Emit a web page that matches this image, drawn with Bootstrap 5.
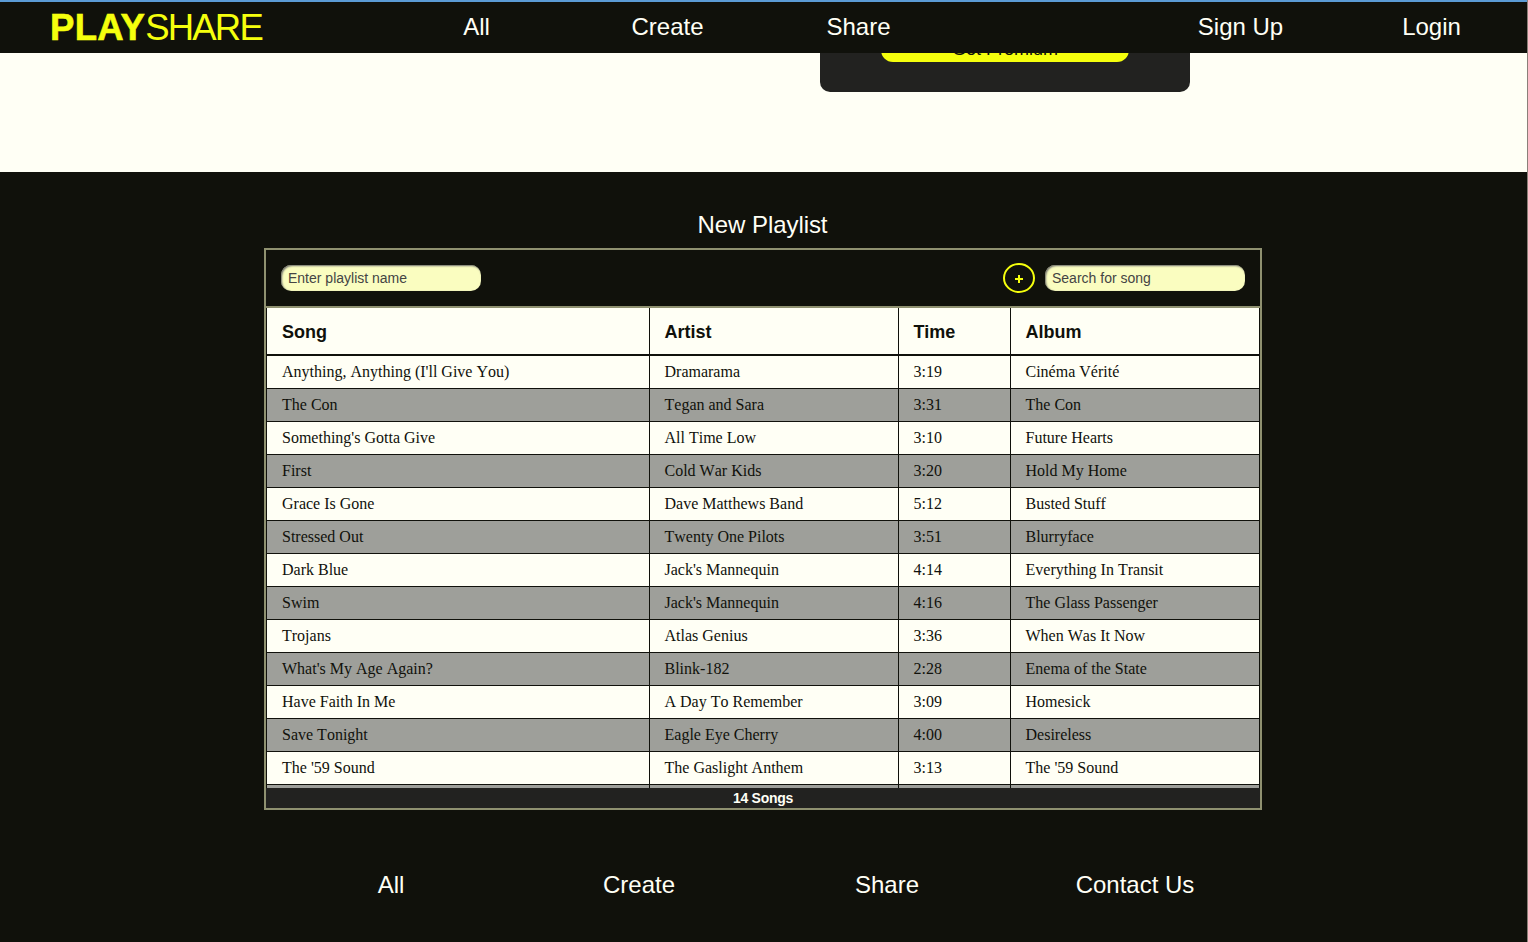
<!DOCTYPE html>
<html lang="en">
<head>
  <meta charset="UTF-8"/>
  <title>PlayShare – New Playlist</title>
  <meta name="viewport" content="width=device-width, initial-scale=1"/>
  <link href="https://cdn.jsdelivr.net/npm/bootstrap@5.3.0/dist/css/bootstrap.min.css" rel="stylesheet"/>
  <style>
    html { background:#8a8078; }
    body { background:#10110b; color:#fffff5; font-family:"Liberation Sans", Arial, sans-serif; overflow:hidden; margin-right:1px; min-height:100vh; }
    .top-nav { height:53px; background:#10110b; border-top:2px solid #5b9bd5; right:1px; }
    .brand-text { width:381px; padding-left:50px; font-size:36.5px; line-height:51px; color:#f5ff0d; text-decoration:none; }
    .brand-text b { letter-spacing:.3px; -webkit-text-stroke:.6px #f5ff0d; }
    .brand-text span { letter-spacing:-1.8px; }
    .top-link { width:191px; font-size:24px; line-height:50px; color:#fffff5; text-align:center; text-decoration:none; }
    .nav-gap { width:191px; }
    .hero-band { height:172px; background:#fffff5; }
    .premium-box { width:370px; height:92px; margin-left:820px; background:#222220; border-radius:0 0 10px 10px; }
    .premium-btn { width:248px; height:62px; padding:35px 0 0; background:#f5ff0d; color:#10110b; border:0; border-radius:0 0 12px 12px; font-size:18px; line-height:20px; }
    .page-title { font-size:24px; line-height:29px; padding:38px 2px 0 0; margin-bottom:9px; font-weight:400; letter-spacing:-.06px; }
    .playlist-box { width:998px; margin-left:264px; border:2px solid #8f9170; }
    .tool-bar { height:58px; padding:0 15px; border-bottom:2px solid #8f9170; }
    .pill-input { width:200px; height:26px; padding:0 7px; font-size:14px; background:#fafdc0; color:#333; border:0; border-radius:10px; box-shadow:inset 1px 1px 2px #666; }
    .pill-input::placeholder { color:#444; opacity:1; }
    .add-btn { width:32px; height:30px; padding:2px 0 0; background:transparent; border:2px solid #f5ff0d; border-radius:50%; margin-right:10px; }
    .add-btn svg { display:block; margin:0 auto; }
    .song-scroll { height:480px; overflow:hidden; margin:0 1px; }
    .song-table { table-layout:fixed; width:993px; margin:0; border-collapse:collapse; --bs-table-bg:#fffff5; --bs-table-color:#10110b; }
    .song-table th, .song-table td { padding:0 15px; border:1px solid #10110b; vertical-align:middle; }
    .song-table tr > :first-child { border-left:0; }
    .song-table tr > :last-child { border-right:0; }
    .song-table thead th { height:47px; padding-top:2px; font-size:18px; font-weight:700; border-top:0; border-bottom:2px solid #10110b; }
    .song-table tbody td { height:33px; font-family:"Liberation Serif", "Times New Roman", serif; font-size:16px; font-kerning:none; }
    .song-table tbody tr:nth-child(even) td { background:#9e9f9a; }
    .count-bar { height:20px; background:#222220; font-size:14px; line-height:20px; font-weight:700; letter-spacing:-.25px; text-align:center; }
    .foot-nav { width:992px; margin:58px 0 0 267px; }
    .foot-link { width:248px; font-size:24px; line-height:33px; color:#fffff5; text-align:center; text-decoration:none; }
  </style>
</head>
<body>
  <!-- Navbar -->
  <nav class="top-nav fixed-top d-flex align-items-start">
    <a class="brand-text" href="#"><b>PLAY</b><span>SHARE</span></a>
    <a class="top-link" href="#">All</a>
    <a class="top-link" href="#">Create</a>
    <a class="top-link" href="#">Share</a>
    <span class="nav-gap"></span>
    <a class="top-link" href="#">Sign Up</a>
    <a class="top-link" href="#">Login</a>
  </nav>

  <!-- Premium band, scrolled mostly under the navbar -->
  <section class="hero-band">
    <div class="premium-box d-flex justify-content-center">
      <button class="premium-btn" type="button">Get Premium</button>
    </div>
  </section>

  <!-- Playlist -->
  <main>
    <h1 class="page-title text-center">New Playlist</h1>
    <div class="playlist-box">
      <div class="tool-bar d-flex align-items-center">
        <input class="pill-input" type="text" placeholder="Enter playlist name"/>
        <button class="add-btn ms-auto" type="button" aria-label="Add song">
          <svg width="8" height="8" viewBox="0 0 8 8"><path d="M3 0h2v3h3v2H5v3H3V5H0V3h3z" fill="#f5ff0d"/></svg>
        </button>
        <input class="pill-input" type="text" placeholder="Search for song"/>
      </div>
      <div class="song-scroll">
        <table class="table song-table">
          <colgroup><col style="width:382px"/><col style="width:249px"/><col style="width:112px"/><col/></colgroup>
          <thead><tr><th>Song</th><th>Artist</th><th>Time</th><th>Album</th></tr></thead>
          <tbody id="song-rows"></tbody>
        </table>
      </div>
      <div class="count-bar">14 Songs</div>
    </div>
  </main>

  <!-- Footer -->
  <footer class="foot-nav d-flex">
    <a class="foot-link" href="#">All</a>
    <a class="foot-link" href="#">Create</a>
    <a class="foot-link" href="#">Share</a>
    <a class="foot-link" href="#">Contact Us</a>
  </footer>

  <script>
    const songs = [
      ["Anything, Anything (I'll Give You)", "Dramarama", "3:19", "Cinéma Vérité"],
      ["The Con", "Tegan and Sara", "3:31", "The Con"],
      ["Something's Gotta Give", "All Time Low", "3:10", "Future Hearts"],
      ["First", "Cold War Kids", "3:20", "Hold My Home"],
      ["Grace Is Gone", "Dave Matthews Band", "5:12", "Busted Stuff"],
      ["Stressed Out", "Twenty One Pilots", "3:51", "Blurryface"],
      ["Dark Blue", "Jack's Mannequin", "4:14", "Everything In Transit"],
      ["Swim", "Jack's Mannequin", "4:16", "The Glass Passenger"],
      ["Trojans", "Atlas Genius", "3:36", "When Was It Now"],
      ["What's My Age Again?", "Blink-182", "2:28", "Enema of the State"],
      ["Have Faith In Me", "A Day To Remember", "3:09", "Homesick"],
      ["Save Tonight", "Eagle Eye Cherry", "4:00", "Desireless"],
      ["The '59 Sound", "The Gaslight Anthem", "3:13", "The '59 Sound"],
      ["", "", "", ""]
    ];
    const body = document.getElementById('song-rows');
    songs.forEach(s => {
      const tr = document.createElement('tr');
      s.forEach(v => {
        const td = document.createElement('td');
        td.textContent = v;
        tr.appendChild(td);
      });
      body.appendChild(tr);
    });
  </script>
  <script src="https://cdn.jsdelivr.net/npm/bootstrap@5.3.0/dist/js/bootstrap.bundle.min.js"></script>
</body>
</html>
